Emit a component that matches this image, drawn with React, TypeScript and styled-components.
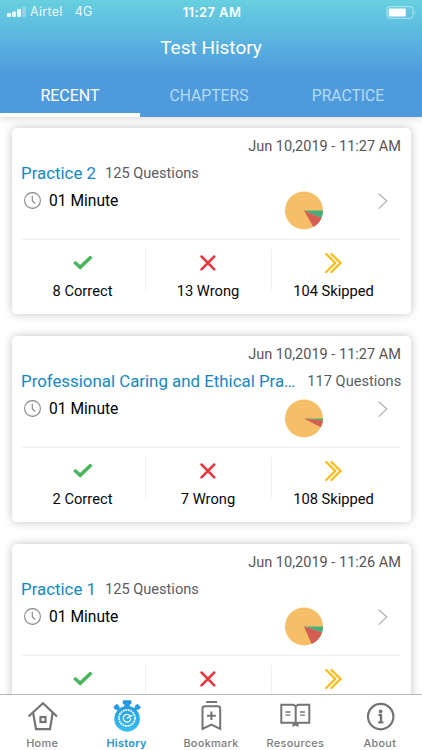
import React from "react";
import styled, { createGlobalStyle } from "styled-components";

const GlobalStyle = createGlobalStyle`
  * { box-sizing: border-box; }
  body { margin: 0; background: #fff; overflow: hidden; font-family: Roboto, sans-serif; }
`;

const Screen = styled.div`
  width: 422px;
  height: 750px;
  display: flex;
  flex-direction: column;
  overflow: hidden;
  background: #fff;
`;

const Header = styled.header`
  flex: none;
  height: 117px;
  display: flex;
  flex-direction: column;
  color: #fff;
  background: linear-gradient(#67d0e0 0, #5fbfe0 25px, #4f9bdc 74px, #4f9adb 100%);
  box-shadow: 0 1px 8px rgba(0, 0, 0, 0.16);
`;

const StatusBar = styled.div`
  height: 24px;
  padding: 0 7px;
  display: grid;
  grid-template-columns: 1fr auto 1fr;
  align-items: center;
  font: 400 12.5px/24px Inter, sans-serif;
`;

const Carrier = styled.div`
  display: flex;
  align-items: center;
  opacity: 0.88;
  letter-spacing: 0.3px;
`;

const Network = styled.span`
  margin-left: 12px;
`;

const SignalIcon = styled.svg`
  width: 19px;
  height: 12px;
  margin-right: 4px;
`;

const Clock = styled.div`
  font-weight: 600;
  font-size: 13px;
  letter-spacing: 0.4px;
  padding-left: 2px;
`;

const Battery = styled.svg`
  width: 30px;
  height: 13px;
  justify-self: end;
  margin-right: -1px;
`;

const Title = styled.h1`
  margin: 0;
  height: 49px;
  text-align: center;
  font-weight: 400;
  font-size: 19px;
  line-height: 47px;
`;

const Tabs = styled.nav`
  flex: 1;
  display: grid;
  grid-template-columns: 140px 138px 140px;
`;

const Tab = styled.div<{ $active?: boolean }>`
  text-align: center;
  font-size: ${(p) => (p.$active ? 16 : 15.7)}px;
  line-height: 46px;
  height: 44px;
  color: ${(p) => (p.$active ? "#fff" : "#b3dcf8")};
  border-bottom: 4px solid ${(p) => (p.$active ? "#fff" : "transparent")};
`;

const List = styled.main`
  flex: 1;
  min-height: 0;
  overflow: hidden;
  padding: 11px 11px 0 12px;
  display: flex;
  flex-direction: column;
  gap: 22px;
`;

const Card = styled.article`
  flex: none;
  height: 186px;
  padding: 0 10px 0 9px;
  border-radius: 5px;
  background: #fff;
  box-shadow: 0 0 10px rgba(0, 0, 0, 0.24);
`;

const DateLine = styled.div`
  height: 36px;
  text-align: right;
  color: #565656;
  font-size: 14.55px;
  line-height: 37px;
`;

const Heading = styled.div`
  height: 19px;
  display: flex;
  align-items: center;
  line-height: 19px;
`;

const Name = styled.span<{ $long?: boolean }>`
  flex: none;
  color: #1688c4;
  font-size: 16.85px;
  margin-right: ${(p) => (p.$long ? 12 : 9)}px;
`;

const Questions = styled.span`
  flex: none;
  color: #5d5d5d;
  font-size: 14.6px;
`;

const Summary = styled.div`
  height: 57px;
  display: flex;
  align-items: flex-start;
  border-bottom: 2px solid #f5f5f5;
`;

const Duration = styled.div`
  width: 263px;
  padding: 8px 0 0 3px;
  display: flex;
  align-items: center;
  gap: 8px;
  color: #000;
  font-size: 15.6px;
  line-height: 20px;

  svg {
    margin-top: -2px;
  }
`;

const Pie = styled.svg`
  width: 40px;
  height: 40px;
  margin-top: 8px;
`;

const Chevron = styled.svg`
  width: 12px;
  height: 20px;
  margin: 8px 0 0 52.5px;
`;

const Results = styled.div`
  display: grid;
  grid-template-columns: 125px 126px 125px;
`;

const Result = styled.div`
  display: flex;
  flex-direction: column;
  align-items: center;
  color: #080808;
  font-size: 14.7px;
  line-height: 20px;
`;

const ResultText = styled.span`
  margin-right: 2px;
`;

const ResultMark = styled.div<{ $divided?: boolean }>`
  width: 100%;
  height: 41px;
  margin: 9px 0 -9px;
  padding: 0 1px 13px 0;
  display: flex;
  align-items: center;
  justify-content: center;
  border-right: 1px solid ${(p) => (p.$divided ? "#efefef" : "transparent")};
`;

const Dock = styled.nav`
  flex: none;
  height: 56px;
  display: grid;
  grid-template-columns: repeat(5, 1fr);
  border-top: 1px solid #b8b8b8;
  background: #fff;
`;

const DockItem = styled.div<{ $active?: boolean }>`
  display: flex;
  flex-direction: column;
  align-items: center;
  padding-top: 3px;
  color: ${(p) => (p.$active ? "#2593d3" : "#7c7c7c")};
  font: ${(p) => (p.$active ? 600 : 500)} 10.9px/14px Inter, sans-serif;
  letter-spacing: 0.3px;
`;

const DockIcon = styled.svg`
  width: 34px;
  height: 34px;
  margin-bottom: 4px;
`;

type Test = {
  name: string;
  long?: boolean;
  questions: number;
  date: string;
  correct: number;
  wrong: number;
  skipped: number;
};

const tests: Test[] = [
  { name: "Practice 2", questions: 125, date: "Jun 10,2019 - 11:27 AM", correct: 8, wrong: 13, skipped: 104 },
  { name: "Professional Caring and Ethical Pra…", long: true, questions: 117, date: "Jun 10,2019 - 11:27 AM", correct: 2, wrong: 7, skipped: 108 },
  { name: "Practice 1", questions: 125, date: "Jun 10,2019 - 11:26 AM", correct: 6, wrong: 17, skipped: 102 },
];

const slice = (from: number, to: number) => {
  const a = from * Math.PI * 2;
  const b = to * Math.PI * 2;
  const r = 19;
  return `M20 19.5L${20 + r * Math.cos(a)} ${19.5 + r * Math.sin(a)}A${r} ${r} 0 0 1 ${20 + r * Math.cos(b)} ${19.5 + r * Math.sin(b)}Z`;
};

function TestCard({ test, clipped }: { test: Test; clipped?: boolean }) {
  const green = test.correct / test.questions;
  const red = green + test.wrong / test.questions;
  return (
    <Card>
      <DateLine>{test.date}</DateLine>
      <Heading>
        <Name $long={test.long}>{test.name}</Name>
        <Questions>{test.questions} Questions</Questions>
      </Heading>
      <Summary>
        <Duration>
          <svg width="17" height="17" viewBox="0 0 17 17" fill="none" stroke="#858585" strokeWidth="1.1">
            <circle cx="8.5" cy="8.5" r="7.9" />
            <path d="M8.3 3.7v5l3 3" />
          </svg>
          01 Minute
        </Duration>
        <Pie viewBox="0 0 40 40">
          <circle cx="20" cy="19.5" r="19" fill="#f6bf67" />
          <path d={slice(0, green)} fill="#43af7c" />
          <path d={slice(green, red)} fill="#d45e52" />
        </Pie>
        <Chevron viewBox="0 0 12 20" fill="none" stroke="#adadad" strokeWidth="1.1">
          <path d="M1.5 2.5L9.8 10L1.5 17.8" />
        </Chevron>
      </Summary>
      <Results>
        <Result>
          <ResultMark $divided>
            <svg width="20" height="16" viewBox="0 0 20 16" fill="none" stroke="#45b85b" strokeWidth="3.5" strokeLinecap="round">
              <path d="M2.4 8L7.2 12.3L17.2 2.7" />
            </svg>
          </ResultMark>
          {!clipped && <ResultText>{test.correct} Correct</ResultText>}
        </Result>
        <Result>
          <ResultMark $divided>
            <svg width="18" height="18" viewBox="0 0 18 18" fill="none" stroke="#e8363f" strokeWidth="2.5" strokeLinecap="round">
              <path d="M2.5 2.5L15.3 15.3M15.3 2.5L2.5 15.3" />
            </svg>
          </ResultMark>
          {!clipped && <ResultText>{test.wrong} Wrong</ResultText>}
        </Result>
        <Result>
          <ResultMark>
            <svg width="19" height="22" viewBox="0 0 19 22" fill="none" stroke="#f7bd16" strokeWidth="2.3" strokeLinecap="round">
              <path d="M2.2 2L11.3 11L2.2 20M7.4 2L16.5 11L7.4 20" />
            </svg>
          </ResultMark>
          {!clipped && <ResultText>{test.skipped} Skipped</ResultText>}
        </Result>
      </Results>
    </Card>
  );
}

const HomeIcon = () => (
  <DockIcon viewBox="0 0 34 34" fill="none" stroke="#747474" strokeWidth="2.2">
    <path d="M3.5 18.5L18 5.3L32 18.5M8.2 15L11 31.2H25L27.6 15" />
    <rect x="15.5" y="19" width="5" height="5" />
  </DockIcon>
);

const HistoryIcon = () => (
  <DockIcon viewBox="0 0 34 34">
    <defs>
      <linearGradient id="watch" x1="0" y1="0" x2="0" y2="1">
        <stop stopColor="#2293df" />
        <stop offset="1" stopColor="#35c0ee" />
      </linearGradient>
    </defs>
    <path
      d="M13.5 2H20.5Q21.5 2 21.5 3V5Q21.5 6 20.5 6H19.8V8Q22.2 8.5 24.4 10L25.3 8.8L24.7 8.2L27.8 5.4L31.3 9.2L28.5 12.1L27.7 11.4L26.8 12.3A13.2 13.2 0 1 1 7.2 12.3L6.3 11.4L5.5 12.1L2.7 9.2L6.2 5.4L9.3 8.2L8.7 8.8L9.6 10Q11.8 8.5 14.2 8V6H13.5Q12.5 6 12.5 5V3Q12.5 2 13.5 2Z"
      fill="url(#watch)"
      transform="translate(.6 .4) scale(.97)"
    />
    <circle cx="17" cy="20" r="8" fill="none" stroke="#f7fcff" strokeWidth="1.9" strokeDasharray="1.8 .75" />
    <path d="M20 17.9A3.8 3.8 0 1 0 20.8 20M16.7 20.4L22.5 17.2" fill="none" stroke="#f7fcff" strokeWidth="1.3" />
  </DockIcon>
);

const BookmarkIcon = () => (
  <DockIcon viewBox="0 0 34 34" fill="none" stroke="#747474" strokeWidth="2">
    <path d="M12.2 4H23" />
    <path d="M8.5 31V10.5Q8.5 8.2 10.8 8.2H23.9Q26.2 8.2 26.2 10.5V31L17.4 26.6ZM17.4 13.4V22M13 17.7H21.8" />
  </DockIcon>
);

const ResourcesIcon = () => (
  <DockIcon viewBox="0 0 34 34" fill="none" stroke="#747474" strokeWidth="2">
    <path d="M3.3 6.8H15.2L17.7 8.2L20.2 6.8H31.3V24.7H20.2L17.7 25.8L15.2 24.7H3.3ZM17.7 8.2V25.8" />
    <path d="M7.5 14H12.4M7.5 17.2H12.4M22 14H26.9M22 17.2H26.9" strokeWidth="1.3" />
    <path d="M14.5 25H20.5V29L17.5 27.4L14.5 29Z" fill="#747474" stroke="none" />
  </DockIcon>
);

const AboutIcon = () => (
  <DockIcon viewBox="0 0 34 34" fill="none" stroke="#747474" strokeWidth="2.2">
    <circle cx="17.7" cy="18.6" r="12.7" />
    <circle cx="17.6" cy="13.5" r="1.9" fill="#747474" stroke="none" />
    <path d="M15.5 17.2H18V24.3M15.2 24.3H20.4" strokeWidth="2.3" />
  </DockIcon>
);

export default function App() {
  return (
    <>
      <GlobalStyle />
      <Screen>
        <Header>
          <StatusBar>
            <Carrier>
              <SignalIcon viewBox="0 0 19 12" fill="#fff">
                <rect y="7" width="4" height="4" rx="1" />
                <rect x="5" y="5.5" width="4" height="5.5" rx="1" />
                <rect x="10" y="3" width="4" height="8" rx="1" />
                <rect x="15" y="1" width="4" height="10" rx="1" opacity=".3" />
              </SignalIcon>
              Airtel<Network>4G</Network>
            </Carrier>
            <Clock>11:27 AM</Clock>
            <Battery viewBox="0 0 30 13" fill="none">
              <rect x="1" y=".7" width="26" height="11.6" rx="2.7" stroke="#fff" strokeOpacity=".5" />
              <rect x="2.7" y="2.5" width="17" height="8" rx="1" fill="#fff" />
              <path d="M28.3 4.5Q29.8 6.5 28.3 8.5Z" fill="#fff" opacity=".5" />
            </Battery>
          </StatusBar>
          <Title>Test History</Title>
          <Tabs>
            <Tab $active>RECENT</Tab>
            <Tab>CHAPTERS</Tab>
            <Tab>PRACTICE</Tab>
          </Tabs>
        </Header>
        <List>
          {tests.map((test, i) => (
            <TestCard key={test.name} test={test} clipped={i === 2} />
          ))}
        </List>
        <Dock>
          <DockItem><HomeIcon />Home</DockItem>
          <DockItem $active><HistoryIcon />History</DockItem>
          <DockItem><BookmarkIcon />Bookmark</DockItem>
          <DockItem><ResourcesIcon />Resources</DockItem>
          <DockItem><AboutIcon />About</DockItem>
        </Dock>
      </Screen>
    </>
  );
}
